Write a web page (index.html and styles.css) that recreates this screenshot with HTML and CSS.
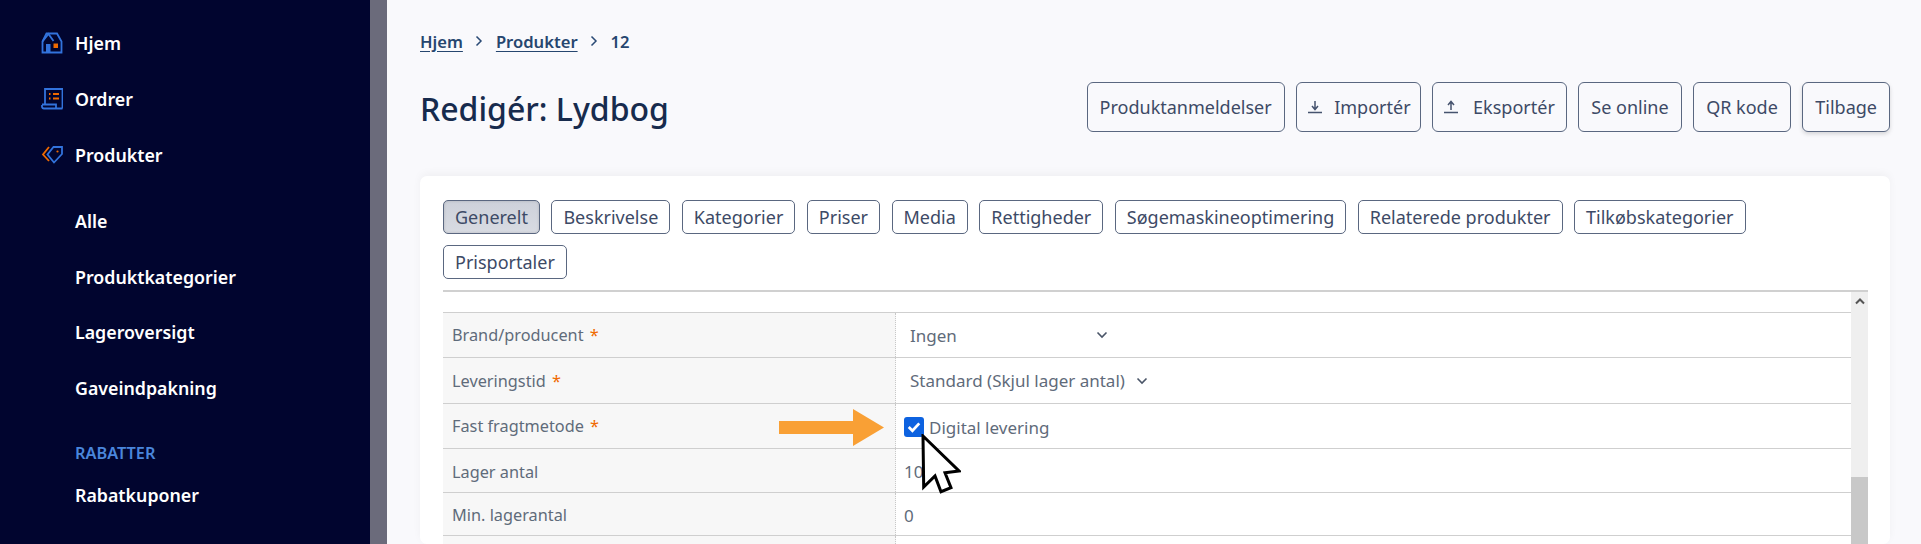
FILE: index.html
```html
<!DOCTYPE html>
<html lang="da">
<head>
<meta charset="utf-8">
<title>Redigér: Lydbog</title>
<link rel="stylesheet" href="styles.css">
</head>
<body>
<div class="app">
  <aside class="sidebar">
    <nav class="nav">
      <a class="nav-item top">
        <svg class="nav-icon" viewBox="0 0 22 22" fill="none"><path d="M1.500 9.500 5.500 1.500H16L20.500 9.500V20.500H1.500Z" stroke="#3273dc" stroke-width="1.800"/><path d="M1.500 9.500 7.500 2 12.500 9" stroke="#3273dc" stroke-width="1.800"/><rect x="5" y="12" width="4.500" height="8" fill="#3273dc"/><rect x="12.500" y="11.500" width="4.500" height="4.500" fill="#f06a00"/></svg>
        <span>Hjem</span>
      </a>
      <a class="nav-item top">
        <svg class="nav-icon" viewBox="0 0 22 22" fill="none"><path d="M4 16V1H21.500V20.500" stroke="#3273dc" stroke-width="1.800"/><path d="M1 17V19A2 2 0 0 0 3 20.500H21.500M1 16.500H15V20" stroke="#3273dc" stroke-width="1.800"/><path d="M8 6H9.500M12 6H18M8 10.500H9.500M12 10.500H18" stroke="#f06a00" stroke-width="2"/></svg>
        <span>Ordrer</span>
      </a>
      <a class="nav-item top">
        <svg class="nav-icon" viewBox="0 0 22 22" fill="none"><path d="M8 3 2 10.500 8 17" stroke="#f06a00" stroke-width="1.800"/><path d="M12.500 3H21V10L13 18.500 6.500 10.500Z" stroke="#3273dc" stroke-width="1.800"/><circle cx="16.500" cy="7.500" r="1.100" fill="#f06a00"/></svg>
        <span>Produkter</span>
      </a>
      <a class="nav-item sub">Alle</a>
      <a class="nav-item sub">Produktkategorier</a>
      <a class="nav-item sub">Lageroversigt</a>
      <a class="nav-item sub">Gaveindpakning</a>
      <div class="nav-heading">RABATTER</div>
      <a class="nav-item sub">Rabatkuponer</a>
    </nav>
  </aside>
  <div class="rail"></div>
  <main class="main">
    <div class="crumbs">
      <a>Hjem</a>
      <svg class="crumb-sep" viewBox="0 0 10 12" fill="none"><path d="M2.500 1.500 7 6 2.500 10.500" stroke="#2a4a75" stroke-width="1.500"/></svg>
      <a>Produkter</a>
      <svg class="crumb-sep" viewBox="0 0 10 12" fill="none"><path d="M2.500 1.500 7 6 2.500 10.500" stroke="#2a4a75" stroke-width="1.500"/></svg>
      <span>12</span>
    </div>
    <header class="head">
      <h1>Redigér: Lydbog</h1>
      <div class="actions">
        <button class="btn">Produktanmeldelser</button>
        <button class="btn btn-import"><svg class="btn-icon" viewBox="0 0 14 14" fill="none"><path d="M7 1V8.500M4 6 7 9.500 10 6M0 12.500H14" stroke="#46536e" stroke-width="1.500"/></svg>Importér</button>
        <button class="btn btn-export"><svg class="btn-icon" viewBox="0 0 14 14" fill="none"><path d="M7 10V2.500M4 5 7 1.500 10 5M0 12.500H14" stroke="#46536e" stroke-width="1.500"/></svg>Eksportér</button>
        <button class="btn">Se online</button>
        <button class="btn">QR kode</button>
        <button class="btn btn-shadow">Tilbage</button>
      </div>
    </header>
    <section class="card">
      <div class="tabs">
        <button class="tab active">Generelt</button>
        <button class="tab">Beskrivelse</button>
        <button class="tab">Kategorier</button>
        <button class="tab">Priser</button>
        <button class="tab">Media</button>
        <button class="tab">Rettigheder</button>
        <button class="tab">Søgemaskineoptimering</button>
        <button class="tab">Relaterede produkter</button>
        <button class="tab">Tilkøbskategorier</button>
        <button class="tab">Prisportaler</button>
      </div>
      <div class="panel">
        <div class="rows">
          <div class="row r45"><div class="label">Brand/producent <em>*</em></div><div class="value"><div class="select sel-a">Ingen<svg class="chev" viewBox="0 0 12 8" fill="none"><path d="M1.500 1.500 6 6 10.500 1.500" stroke="#4a5568" stroke-width="1.600"/></svg></div></div></div>
          <div class="row r46"><div class="label">Leveringstid <em>*</em></div><div class="value"><div class="select sel-b">Standard (Skjul lager antal)<svg class="chev" viewBox="0 0 12 8" fill="none"><path d="M1.500 1.500 6 6 10.500 1.500" stroke="#4a5568" stroke-width="1.600"/></svg></div></div></div>
          <div class="row r45"><div class="label">Fast fragtmetode <em>*</em></div><div class="value check-cell"><span class="check"><svg viewBox="0 0 19 19" fill="none"><path d="M4.500 9.500 8 13 14.500 6" stroke="#fff" stroke-width="2.600"/></svg></span>Digital levering</div></div>
          <div class="row r44"><div class="label">Lager antal</div><div class="value">10</div></div>
          <div class="row r43"><div class="label">Min. lagerantal</div><div class="value">0</div></div>
          <div class="row r43"><div class="label"></div><div class="value"></div></div>
        </div>
        <div class="scrollbar">
          <svg class="scroll-up" viewBox="0 0 10 7" fill="none"><path d="M1 5.500 5 1.500 9 5.500" stroke="#555" stroke-width="2"/></svg>
          <div class="thumb"></div>
        </div>
      </div>
    </section>
  </main>
</div>
<svg class="callout-arrow" viewBox="0 0 105 37"><path d="M0 12H74V0L105 18.500 74 37V25H0Z" fill="#f9a035"/></svg>
<svg class="callout-cursor" viewBox="0 0 40 60"><path d="M2 2 38 37 24 38.700 30 53.700 20 57.700 14 42 2.700 53Z" fill="#fff" stroke="#000" stroke-width="3"/></svg>
</body>
</html>
```
FILE: styles.css
```css
* { box-sizing: border-box; }
html, body { margin: 0; height: 100%; overflow: hidden; }
body { font-family: "Noto Sans", "Open Sans", sans-serif; background: #f9f9fc; position: relative; }
button { font-family: inherit; }
.app { display: flex; height: 544px; overflow: hidden; }
.sidebar { width: 370px; flex: none; background: #01052f; padding-top: 15.600px; }
.rail { width: 17px; flex: none; background: #6b6b7b; }
.nav { display: flex; flex-direction: column; padding-left: 41px; }
.nav-item { display: flex; align-items: center; height: 55.600px; color: #fff; font-size: 17.800px; font-weight: 600; }
.nav-item.top { gap: 12px; }
.nav-item.sub { padding-left: 34px; }
.nav-item.top + .nav-item.sub { margin-top: 11px; }
.nav-icon { width: 22px; height: 22px; flex: none; }
.nav-heading { margin: 23px 0 0 34px; height: 28px; line-height: 28px; color: #4a86dc; font-size: 16.300px; font-weight: 600; }
.nav-heading + .nav-item { height: 58px; margin-top: -1px; }
.main { flex: 1; min-width: 0; height: 544px; overflow: hidden; padding: 29px 31px 0 33px; }
.crumbs { display: flex; align-items: center; gap: 11.500px; height: 24px; font-size: 16.600px; font-weight: 600; color: #26466f; }
.crumbs a { text-decoration: underline; text-underline-offset: 3px; }
.crumb-sep { width: 10px; height: 12px; flex: none; }
.head { display: flex; align-items: center; justify-content: space-between; margin-top: 29px; height: 50px; }
h1 { margin: 0; padding-top: 3px; font-size: 32px; font-weight: 500; color: #172b4d; }
.actions { display: flex; gap: 11.500px; }
.btn { height: 50px; padding: 0 12px; display: flex; align-items: center; gap: 11px; border: 1px solid #5a6780; border-radius: 6px; background: transparent; color: #3d4a66; font-size: 18px; }
.btn-import { padding: 0 9px 0 11px; gap: 12px; }
.btn-export { padding: 0 11px; gap: 15px; }
.btn-shadow { box-shadow: 0 2px 4px rgba(0,0,0,.15); }
.btn-icon { width: 14px; height: 14px; flex: none; }
.card { margin-top: 44px; height: 368px; padding: 24px 22px 0 23px; background: #fff; border-radius: 7px; box-shadow: 0 -3px 8px rgba(0,0,0,.04); }
.tabs { display: flex; flex-wrap: wrap; gap: 11px 11.500px; height: 90px; align-content: flex-start; }
.tab { height: 34px; padding: 0 11px; border: 1px solid #5a6780; border-radius: 5px; background: #fff; color: #3d4a66; font-size: 18px; }
.tab.active { background: linear-gradient(#cdd1da, #d8dbe2); box-shadow: inset 0 0 3px rgba(0,0,0,.15); }
.panel { display: flex; border-top: 2px solid #d0d0d0; height: 254px; overflow: hidden; }
.rows { flex: 1; padding-top: 20px; }
.row { display: grid; grid-template-columns: 453px 1fr; border-top: 1px solid #cfcfcf; font-size: 17px; color: #5f6b7a; }
.r45 { height: 45px; }
.r46 { height: 46px; }
.r44 { height: 44px; }
.r43 { height: 43px; }
.label { display: flex; align-items: center; padding-left: 9px; background: #f7f7f7; border-right: 1px dotted #c8c8c8; font-size: 16.300px; white-space: pre; }
.label em { font-style: normal; color: #f06a00; margin-left: 2px; }
.value { display: flex; align-items: center; padding-left: 8px; }
.r44 .label, .r43 .label, .r44 .value, .r43 .value { padding-top: 2px; }
.select { display: flex; align-items: center; padding-left: 6px; }
.sel-a { width: 204px; justify-content: space-between; }
.sel-b { gap: 11px; }
.chev { width: 12px; height: 8px; flex: none; }
.check-cell { gap: 5px; padding-top: 2px; }
.check { width: 20px; height: 20px; border-radius: 3px; background: #0d62e0; display: block; }
.check svg { display: block; width: 20px; height: 20px; }
.scrollbar { width: 17px; flex: none; background: #efefef; position: relative; }
.scroll-up { display: block; width: 10px; height: 7px; margin: 6px auto 0; }
.thumb { position: absolute; left: 0; right: 0; top: 185px; bottom: 0; background: #c8c8c8; }
.callout-arrow { position: absolute; left: 779px; top: 409px; width: 105px; height: 37px; }
.callout-cursor { position: absolute; left: 921px; top: 434px; width: 40px; height: 60px; }
```
